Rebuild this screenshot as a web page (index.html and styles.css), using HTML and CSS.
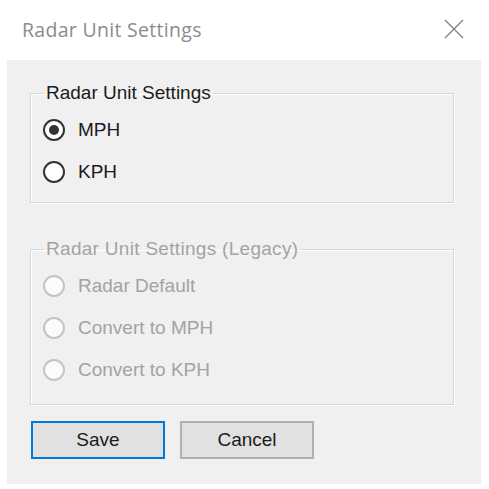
FILE: index.html
```html
<!DOCTYPE html>
<html>
<head>
<meta charset="utf-8">
<link rel="stylesheet" href="styles.css">
</head>
<body>
<div class="titlebar">
  <span class="title">Radar Unit Settings</span>
  <svg class="close" width="20" height="20" viewBox="0 0 20 20"><path d="M1 1 L19 19 M19 1 L1 19" stroke="#808080" stroke-width="1.3" fill="none"/></svg>
</div>
<div class="panel">
  <fieldset class="group">
    <legend>Radar Unit Settings</legend>
    <div class="row"><span class="radio checked"></span><span class="label">MPH</span></div>
    <div class="row"><span class="radio"></span><span class="label">KPH</span></div>
  </fieldset>
  <fieldset class="group legacy">
    <legend>Radar Unit Settings (Legacy)</legend>
    <div class="row"><span class="radio"></span><span class="label">Radar Default</span></div>
    <div class="row"><span class="radio"></span><span class="label">Convert to MPH</span></div>
    <div class="row"><span class="radio"></span><span class="label">Convert to KPH</span></div>
  </fieldset>
  <div class="buttons">
    <button class="btn primary">Save</button>
    <button class="btn">Cancel</button>
  </div>
</div>
</body>
</html>
```
FILE: styles.css
```css
html, body {
  margin: 0;
  padding: 0;
  background: #ffffff;
}
body {
  width: 489px;
  height: 489px;
  overflow: hidden;
  font-family: "Liberation Sans", Arial, sans-serif;
}
.titlebar {
  height: 60px;
  display: flex;
  align-items: flex-start;
  justify-content: space-between;
  box-sizing: border-box;
  padding: 17px 25px 0 22px;
}
.title {
  font-family: "Open Sans", "Noto Sans", sans-serif;
  font-size: 19.5px;
  letter-spacing: 0.3px;
  color: #8c8c8c;
  line-height: 26px;
}
.close {
  margin-top: 2px;
}
.panel {
  margin: 0 8px 5px 7px;
  background: #f0f0f0;
  box-sizing: border-box;
  height: 424px;
  padding: 22px 27px 0 23px;
  display: flex;
  flex-direction: column;
}
.group {
  margin: 0;
  border: 1px solid #d7d7d7;
  box-shadow: inset 1px 1px 0 #ffffff, 1px 1px 0 #ffffff;
  padding: 5px 12px 9px 12px;
  min-width: 0;
}
.group legend {
  font-size: 19px;
  line-height: 22px;
  color: #1b1b1b;
  padding: 0 2px;
  margin-left: 1px;
}
.group.legacy {
  margin-top: 35px;
  padding-bottom: 13px;
}
.legacy legend {
  letter-spacing: 0.3px;
}
.legacy legend, .legacy .label {
  color: #a3a3a3;
}
.row {
  height: 42px;
  display: flex;
  align-items: center;
}
.radio {
  width: 22px;
  height: 22px;
  box-sizing: border-box;
  border-radius: 50%;
  border: 2px solid #333333;
  background: #ffffff;
  display: flex;
  align-items: center;
  justify-content: center;
  flex: none;
}
.radio.checked::after {
  content: "";
  width: 10px;
  height: 10px;
  border-radius: 50%;
  background: #333333;
}
.legacy .radio {
  border-color: #c4c4c4;
  background: #fbfbfb;
}
.label {
  font-size: 19px;
  color: #1b1b1b;
  margin-left: 13px;
  line-height: 22px;
}
.buttons {
  display: flex;
  gap: 15px;
  margin-top: 16px;
  padding-left: 1px;
}
.btn {
  width: 134px;
  height: 38px;
  box-sizing: border-box;
  background: #e1e1e1;
  border: 2px solid #b0b0b0;
  font-family: "Liberation Sans", Arial, sans-serif;
  font-size: 19px;
  color: #1b1b1b;
  padding: 0;
}
.btn.primary {
  border: 2px solid #0078d7;
}
```
